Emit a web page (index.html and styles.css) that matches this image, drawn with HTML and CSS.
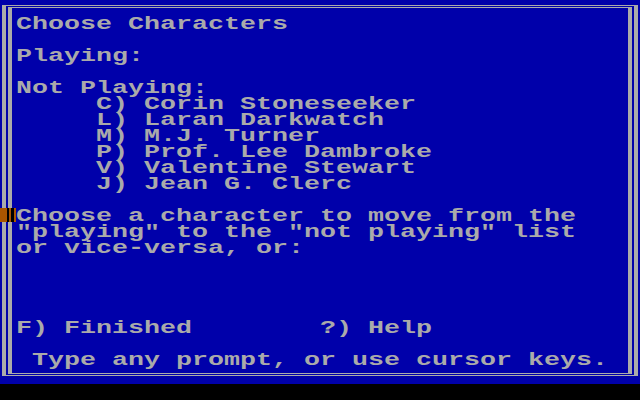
FILE: index.html
```html
<!DOCTYPE html>
<html>
<head>
<meta charset="utf-8">
<link rel="stylesheet" href="styles.css">
</head>
<body>
<div class="screen">
  <div class="frame-outer">
    <div class="frame-inner">
      <div class="txt">
        <div class="ln">Choose Characters</div>
        <div class="ln"></div>
        <div class="ln">Playing:</div>
        <div class="ln"></div>
        <div class="ln">Not Playing:</div>
        <div class="ln">     C) Corin Stoneseeker</div>
        <div class="ln">     L) Laran Darkwatch</div>
        <div class="ln">     M) M.J. Turner</div>
        <div class="ln">     P) Prof. Lee Dambroke</div>
        <div class="ln">     V) Valentine Stewart</div>
        <div class="ln">     J) Jean G. Clerc</div>
        <div class="ln"></div>
        <div class="ln">Choose a character to move from the</div>
        <div class="ln">"playing" to the "not playing" list</div>
        <div class="ln">or vice-versa, or:</div>
        <div class="ln"></div>
        <div class="ln"></div>
        <div class="ln"></div>
        <div class="ln"></div>
        <div class="ln">F) Finished        ?) Help</div>
        <div class="ln"></div>
        <div class="ln"> Type any prompt, or use cursor keys.</div>
      </div>
    </div>
  </div>
  <div class="cursor"></div>
</div>
</body>
</html>
```

FILE: styles.css
```css
html, body {
  margin: 0;
  padding: 0;
  background: #000000;
}

body {
  width: 640px;
  height: 400px;
  overflow: hidden;
}

.screen {
  position: relative;
  width: 640px;
  height: 384px;
  background: #0000aa;
  padding-top: 5px;
  padding-left: 2px;
  box-sizing: border-box;
  overflow: hidden;
}

.frame-outer {
  width: 636px;
  height: 371px;
  box-sizing: border-box;
  border-style: solid;
  border-color: #aaaaaa;
  border-width: 1px 4px;
  padding: 1px 2px;
}

.frame-inner {
  width: 100%;
  height: 100%;
  box-sizing: border-box;
  border-style: solid;
  border-color: #aaaaaa;
  border-width: 1px 4px;
  padding: 8px 0 0 4px;
  overflow: hidden;
}

.txt {
  width: 400px;
  font-family: "Liberation Mono", "DejaVu Sans Mono", monospace;
  font-weight: bold;
  font-size: 18px;
  color: #aaaaaa;
  transform: scaleX(1.48148);
  transform-origin: left top;
}

.ln {
  height: 16px;
  line-height: 16px;
  white-space: pre;
}

.cursor {
  position: absolute;
  left: 0;
  top: 208px;
  width: 16px;
  height: 14px;
  background: linear-gradient(to right,
    #aa5500 0, #aa5500 7px,
    #000000 7px, #000000 9px,
    #aa5500 9px, #aa5500 11px,
    #000000 11px, #000000 14px,
    #aa5500 14px, #aa5500 16px);
}
```
